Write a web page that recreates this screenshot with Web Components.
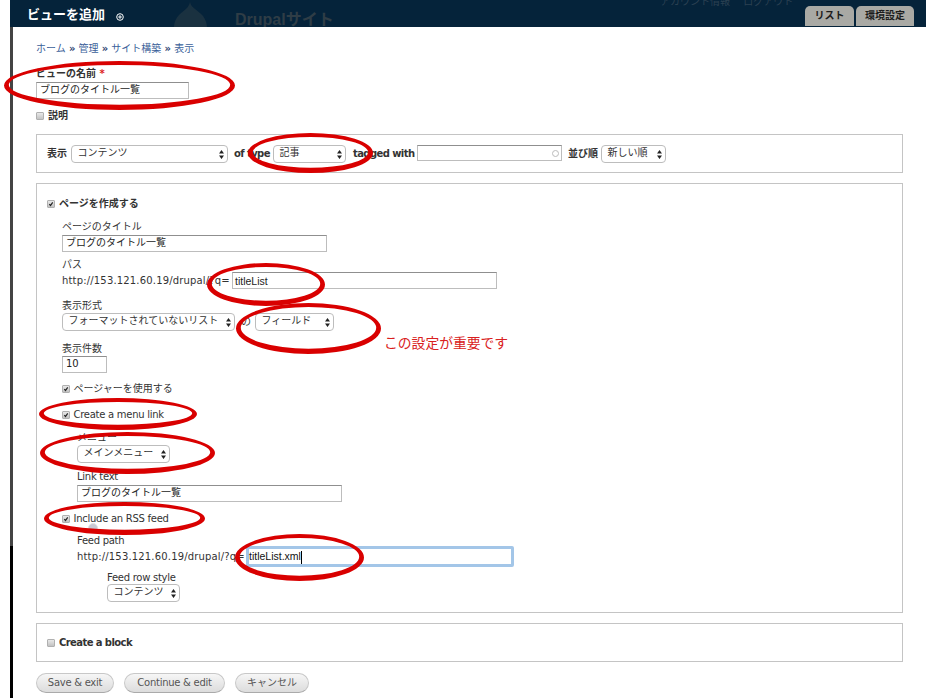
<!DOCTYPE html>
<html lang="ja">
<head>
<meta charset="utf-8">
<title>ビューを追加</title>
<style>
    html, body{ margin: 0; padding: 0; background: #fff; }
    body{
        width: 926px;
        height: 698px;
        overflow: hidden;
        position: relative;
        font-family: "DejaVu Sans", "Noto Sans CJK JP", sans-serif;
        font-size: 10px;
        color: #333;
    }
</style>
</head>
<body>
<view-page></view-page>

<script>
const FONT = `"DejaVu Sans", "Noto Sans CJK JP", sans-serif`;

class AdminTab extends HTMLElement{
    constructor(){
        super();
        this.attachShadow({mode: "open"}).innerHTML = `
            <style>
                :host{
                    display: block;
                    box-sizing: border-box;
                    width: var(--w, 49px);
                    height: 20px;
                    background: #a9a9a4;
                    border-radius: 5px 5px 0 0;
                    color: #1d1d1d;
                    font: bold 10px/20px ${FONT};
                    text-align: center;
                }
            </style>
            <slot></slot>`;
    }
}
customElements.define("admin-tab", AdminTab);

class AdminBar extends HTMLElement{
    constructor(){
        super();
        this.attachShadow({mode: "open"}).innerHTML = `
            <style>
                :host{
                    display: flex;
                    box-sizing: border-box;
                    height: 27px;
                    padding-left: 17px;
                    background: #05233a;
                    overflow: hidden;
                    position: relative;
                    font-family: ${FONT};
                }
                #title{
                    color: #fff;
                    font-size: 13px;
                    font-weight: bold;
                    line-height: 30px;
                    height: 27px;
                }
                #add{
                    width: 8px;
                    height: 8px;
                    margin: 13px 0 0 11px;
                }
                #logo{
                    width: 38px;
                    height: 40px;
                    margin: 2px 0 0 49px;
                }
                #brand{
                    margin-left: 24px;
                    color: #2f3d46;
                    font-size: 16px;
                    font-weight: bold;
                    line-height: 39px;
                    font-family: "Liberation Sans", "Noto Sans CJK JP", sans-serif;
                }
                #account{
                    position: absolute;
                    left: 650px;
                    top: -5px;
                    color: #2c4152;
                    font-size: 10px;
                    line-height: 14px;
                    word-spacing: 10px;
                    white-space: nowrap;
                }
                #tabs{
                    position: absolute;
                    right: 12px;
                    bottom: 1px;
                    display: flex;
                    gap: 2px;
                }
            </style>
            <div id="title">ビューを追加</div>
            <svg id="add" viewBox="0 0 8 8"><circle cx="4" cy="4" r="3.3" fill="none" stroke="#fff" stroke-width="1"/><path d="M4 2.2v3.6M2.2 4h3.6" stroke="#fff" stroke-width="1"/></svg>
            <svg id="logo" viewBox="0 0 38 40"><path d="M17 0c1 6 8 8 13 14 6 8 5 18-2 23-6 4-17 4-23-1C-1 30 0 19 6 13 11 8 16 6 17 0z" fill="#1a3140"/></svg>
            <div id="brand">Drupalサイト</div>
            <div id="account">アカウント情報 ログアウト</div>
            <div id="tabs"><admin-tab>リスト</admin-tab><admin-tab style="--w:58px">環境設定</admin-tab></div>`;
    }
}
customElements.define("admin-bar", AdminBar);

class TextBox extends HTMLElement{
    constructor(){
        super();
        this.attachShadow({mode: "open"}).innerHTML = `
            <style>
                :host{
                    display: block;
                    box-sizing: border-box;
                    width: var(--w, 265px);
                    height: 17px;
                    padding: 0 3px;
                    background: #fff;
                    border: 1px solid #bdbdbd;
                    border-top-color: #8f8f8f;
                    color: #222;
                    font: 10px/14px ${FONT};
                    white-space: nowrap;
                    position: relative;
                    flex: none;
                }
                :host([latin]){
                    padding-left: 2px;
                    font: 10.5px/16px "Liberation Sans", sans-serif;
                }
                :host([focused]){
                    width: 268px;
                    height: 21px;
                    border: 3px solid #a3c6e8;
                    border-radius: 2px;
                    padding: 0 0 0 0;
                    color: #111;
                    line-height: 15px;
                }
                :host([focused]) #caret{ display: inline-block; }
                #caret{
                    display: none;
                    width: 1px;
                    height: 13px;
                    background: #000;
                    vertical-align: middle;
                }
                #clear{
                    display: none;
                    position: absolute;
                    right: 2px;
                    top: 4px;
                    width: 5px;
                    height: 5px;
                    border: 1px solid #bbb;
                    border-radius: 50%;
                }
                :host([search]) #clear{ display: block; }
            </style>
            <span id="line"><slot></slot><span id="caret"></span></span><span id="clear"></span>`;
    }
}
customElements.define("text-box", TextBox);

class SelectBox extends HTMLElement{
    constructor(){
        super();
        this.attachShadow({mode: "open"}).innerHTML = `
            <style>
                :host{
                    display: flex;
                    align-items: center;
                    justify-content: space-between;
                    box-sizing: border-box;
                    width: var(--w, 73px);
                    height: 18px;
                    padding: 0 3px 0 5.5px;
                    background: #fff;
                    border: 1px solid #bdbdbd;
                    border-radius: 4px;
                    color: #333;
                    font: 10px/14px ${FONT};
                    white-space: nowrap;
                    flex: none;
                }
                span{ margin-top: -2px; }
                svg{ width: 5px; height: 9px; flex: none; }
            </style>
            <span><slot></slot></span>
            <svg viewBox="0 0 5 9"><path d="M2.5 0L5 3.4H0zM2.5 9L0 5.6h5z" fill="#222"/></svg>`;
    }
}
customElements.define("select-box", SelectBox);

class CheckLabel extends HTMLElement{
    constructor(){
        super();
        this.attachShadow({mode: "open"}).innerHTML = `
            <style>
                :host{
                    display: flex;
                    align-items: center;
                    height: 12px;
                    font: 10px/12px ${FONT};
                    color: #333;
                }
                :host([strong]){ font-weight: bold; }
                #box{
                    box-sizing: border-box;
                    width: 8px;
                    height: 8px;
                    margin: 2px 3.5px 0 0;
                    background: linear-gradient(#e8e8e8, #c2c2c2);
                    border: 1px solid #b0b0b0;
                    border-radius: 1px;
                    position: relative;
                    flex: none;
                }
                :host([strong]) #box{ margin-right: 4px; }
                #text{ margin-top: 2px; }
                svg{ display: none; position: absolute; left: 0; top: 0; width: 6px; height: 6px; }
                :host([checked]) svg{ display: block; }
            </style>
            <div id="box"><svg viewBox="0 0 6 6"><path d="M1.3 3.2l1.2 1.3L4.7 1.4" fill="none" stroke="#222" stroke-width="1.2"/></svg></div>
            <span id="text"><slot></slot></span>`;
    }
}
customElements.define("check-label", CheckLabel);

class FieldBox extends HTMLElement{
    constructor(){
        super();
        this.attachShadow({mode: "open"}).innerHTML = `
            <style>
                :host{
                    display: block;
                    box-sizing: border-box;
                    width: 867px;
                    border: 1px solid #c4c4c4;
                    padding: var(--pad, 13px 10px);
                }
            </style>
            <slot></slot>`;
    }
}
customElements.define("field-box", FieldBox);

class PillButton extends HTMLElement{
    constructor(){
        super();
        this.attachShadow({mode: "open"}).innerHTML = `
            <style>
                :host{
                    display: block;
                    box-sizing: border-box;
                    width: var(--w, 78px);
                    height: 20px;
                    background: linear-gradient(#f6f6f6, #dcdcdc);
                    border: 1px solid #c8c8c8;
                    border-bottom-color: #aaa;
                    border-radius: 10px;
                    color: #555;
                    font: 10px/18px ${FONT};
                    text-align: center;
                }
            </style>
            <slot></slot>`;
    }
}
customElements.define("pill-button", PillButton);

// hand drawn ring: outer ellipse minus a slightly raised inner one, so the bottom is thicker
class InkRing extends HTMLElement{
    constructor(){
        super();
        const x = +this.getAttribute("x"), y = +this.getAttribute("y");
        const w = +this.getAttribute("w"), h = +this.getAttribute("h");
        const rx = w / 2, ry = h / 2;
        const oval = (cy, a, b) => `M${rx - a} ${cy}a${a} ${b} 0 1 0 ${a * 2} 0a${a} ${b} 0 1 0 ${-a * 2} 0z`;
        this.attachShadow({mode: "open"}).innerHTML = `
            <style>
                :host{ position: absolute; left: ${x}px; top: ${y}px; width: ${w}px; height: ${h}px; }
                svg{ display: block; overflow: visible; }
            </style>
            <svg width="${w}" height="${h}"><path fill-rule="evenodd" fill="#d90000"
                d="${oval(ry, rx, ry)}${oval(ry - 0.7, rx - 4.8, ry - 4.6)}"/></svg>`;
    }
}
customElements.define("ink-ring", InkRing);

class ViewForm extends HTMLElement{
    constructor(){
        super();
        this.attachShadow({mode: "open"}).innerHTML = `
            <style>
                :host{
                    display: block;
                    padding: 15px 0 0 23px;
                    font: 10px/12px ${FONT};
                    color: #333;
                }
                nav{ color: #3b5f9a; height: 12px; line-height: 14px; }
                nav b{ color: #2d4470; font-weight: bold; }
                label, .t{ display: block; height: 12px; line-height: 14px; white-space: nowrap; }
                .b{ font-weight: bold; }
                .tight{ letter-spacing: -0.58px; }
                .lat{ letter-spacing: -0.27px; }
                em{ color: #d22; font-style: normal; font-weight: bold; }
                .row{ display: flex; align-items: center; white-space: nowrap; }
                .url{ letter-spacing: 0.17px; }
                #actions{ display: flex; gap: 10px; margin-top: 11px; }
            </style>
            <nav>ホーム <b>»</b> 管理 <b>»</b> サイト構築 <b>»</b> 表示</nav>
            <label class="b" style="margin-top:13px">ビューの名前 <em>*</em></label>
            <text-box style="--w:153px;margin-top:3px">ブログのタイトル一覧</text-box>
            <check-label strong style="margin-top:10px">説明</check-label>

            <field-box style="margin-top:13px;--pad:10px 10px;height:39px">
                <div class="row">
                    <span class="b" style="width:24px">表示</span>
                    <select-box style="--w:157px">コンテンツ</select-box>
                    <span class="b tight" style="width:39px;margin-left:6px">of type</span>
                    <select-box>記事</select-box>
                    <span class="b tight" style="margin-left:7px;width:64px">tagged with</span>
                    <text-box search style="--w:145px;height:16px;margin-top:-2px">&nbsp;</text-box>
                    <span class="b" style="margin-left:6px;width:33px">並び順</span>
                    <select-box style="--w:65px">新しい順</select-box>
                </div>
            </field-box>

            <field-box style="margin-top:10px;--pad:13px 10px 0;height:430px">
                <check-label strong checked>ページを作成する</check-label>
                <div style="margin-left:15px">
                    <label style="margin-top:11px">ページのタイトル</label>
                    <text-box style="margin-top:3px">ブログのタイトル一覧</text-box>
                    <label style="margin-top:6px">パス</label>
                    <div class="row" style="margin-top:2px"><span class="url" style="width:170px">http://153.121.60.19/drupal/?q=</span><text-box latin>titleList</text-box></div>
                    <label style="margin-top:10px">表示形式</label>
                    <div class="row" style="margin-top:2px">
                        <select-box style="--w:173px">フォーマットされていないリスト</select-box>
                        <span style="width:20px;padding-left:6px;box-sizing:border-box">の</span>
                        <select-box style="--w:79px">フィールド</select-box>
                    </div>
                    <label style="margin-top:11px">表示件数</label>
                    <text-box style="--w:45px;margin-top:2px">10</text-box>
                    <check-label checked style="margin-top:9px">ページャーを使用する</check-label>
                    <check-label class="lat" checked style="margin-top:14px">Create a menu link</check-label>
                    <div style="margin-left:15px">
                        <label style="margin-top:11px">メニュー</label>
                        <select-box style="--w:93px;margin-top:2px">メインメニュー</select-box>
                        <label class="lat" style="margin-top:7px">Link text</label>
                        <text-box style="margin-top:3px">ブログのタイトル一覧</text-box>
                    </div>
                    <check-label class="lat" checked style="margin-top:10px">Include an RSS feed</check-label>
                    <div style="margin-left:15px">
                        <label class="lat" style="margin-top:10px">Feed path</label>
                        <div class="row"><span class="url" style="width:169px">http://153.121.60.19/drupal/?q=</span><text-box latin focused>titleList.xml</text-box></div>
                        <div style="margin-left:30px">
                            <label class="lat" style="margin-top:4px">Feed row style</label>
                            <select-box style="margin-top:1px">コンテンツ</select-box>
                        </div>
                    </div>
                </div>
            </field-box>

            <field-box style="margin-top:10px;--pad:12px 10px 0;height:39px">
                <check-label class="tight" strong>Create a block</check-label>
            </field-box>

            <div id="actions">
                <pill-button class="lat">Save &amp; exit</pill-button>
                <pill-button class="lat" style="--w:101px">Continue &amp; edit</pill-button>
                <pill-button style="--w:74px">キャンセル</pill-button>
            </div>`;
    }
}
customElements.define("view-form", ViewForm);

class ViewPage extends HTMLElement{
    constructor(){
        super();
        this.attachShadow({mode: "open"}).innerHTML = `
            <style>
                :host{
                    display: block;
                    width: 926px;
                    height: 698px;
                    padding-left: 10px;
                    box-sizing: border-box;
                    position: relative;
                }
                #body{
                    border-left: 3px solid;
                    border-image: linear-gradient(#444 0, #444 518px, #000 518px) 1;
                    height: 671px;
                }
                #note{
                    position: absolute;
                    left: 384px;
                    top: 333px;
                    color: #d92020;
                    font: 13.8px/18px "Noto Sans CJK JP", sans-serif;
                    white-space: nowrap;
                }
                #pin{
                    position: absolute;
                    left: 88px;
                    top: 523px;
                    width: 8px;
                    height: 8px;
                    border-radius: 50%;
                    background: #c9c9d4;
                    border: 1px solid #e2e2e2;
                }
            </style>
            <admin-bar></admin-bar>
            <div id="body"><view-form></view-form></div>
            <div id="pin"></div>
            <div id="note">この設定が重要です</div>
            <ink-ring x="4" y="61" w="231" h="49"></ink-ring>
            <ink-ring x="248" y="133" w="125" h="40"></ink-ring>
            <ink-ring x="207" y="263" w="118" h="43"></ink-ring>
            <ink-ring x="236" y="303" w="145" h="51"></ink-ring>
            <ink-ring x="39" y="398" w="158" h="32"></ink-ring>
            <ink-ring x="40" y="432" w="175" h="42"></ink-ring>
            <ink-ring x="44" y="502" w="161" h="33"></ink-ring>
            <ink-ring x="235" y="534" w="129" h="47"></ink-ring>`;
    }
}
customElements.define("view-page", ViewPage);
</script>
</body>
</html>
